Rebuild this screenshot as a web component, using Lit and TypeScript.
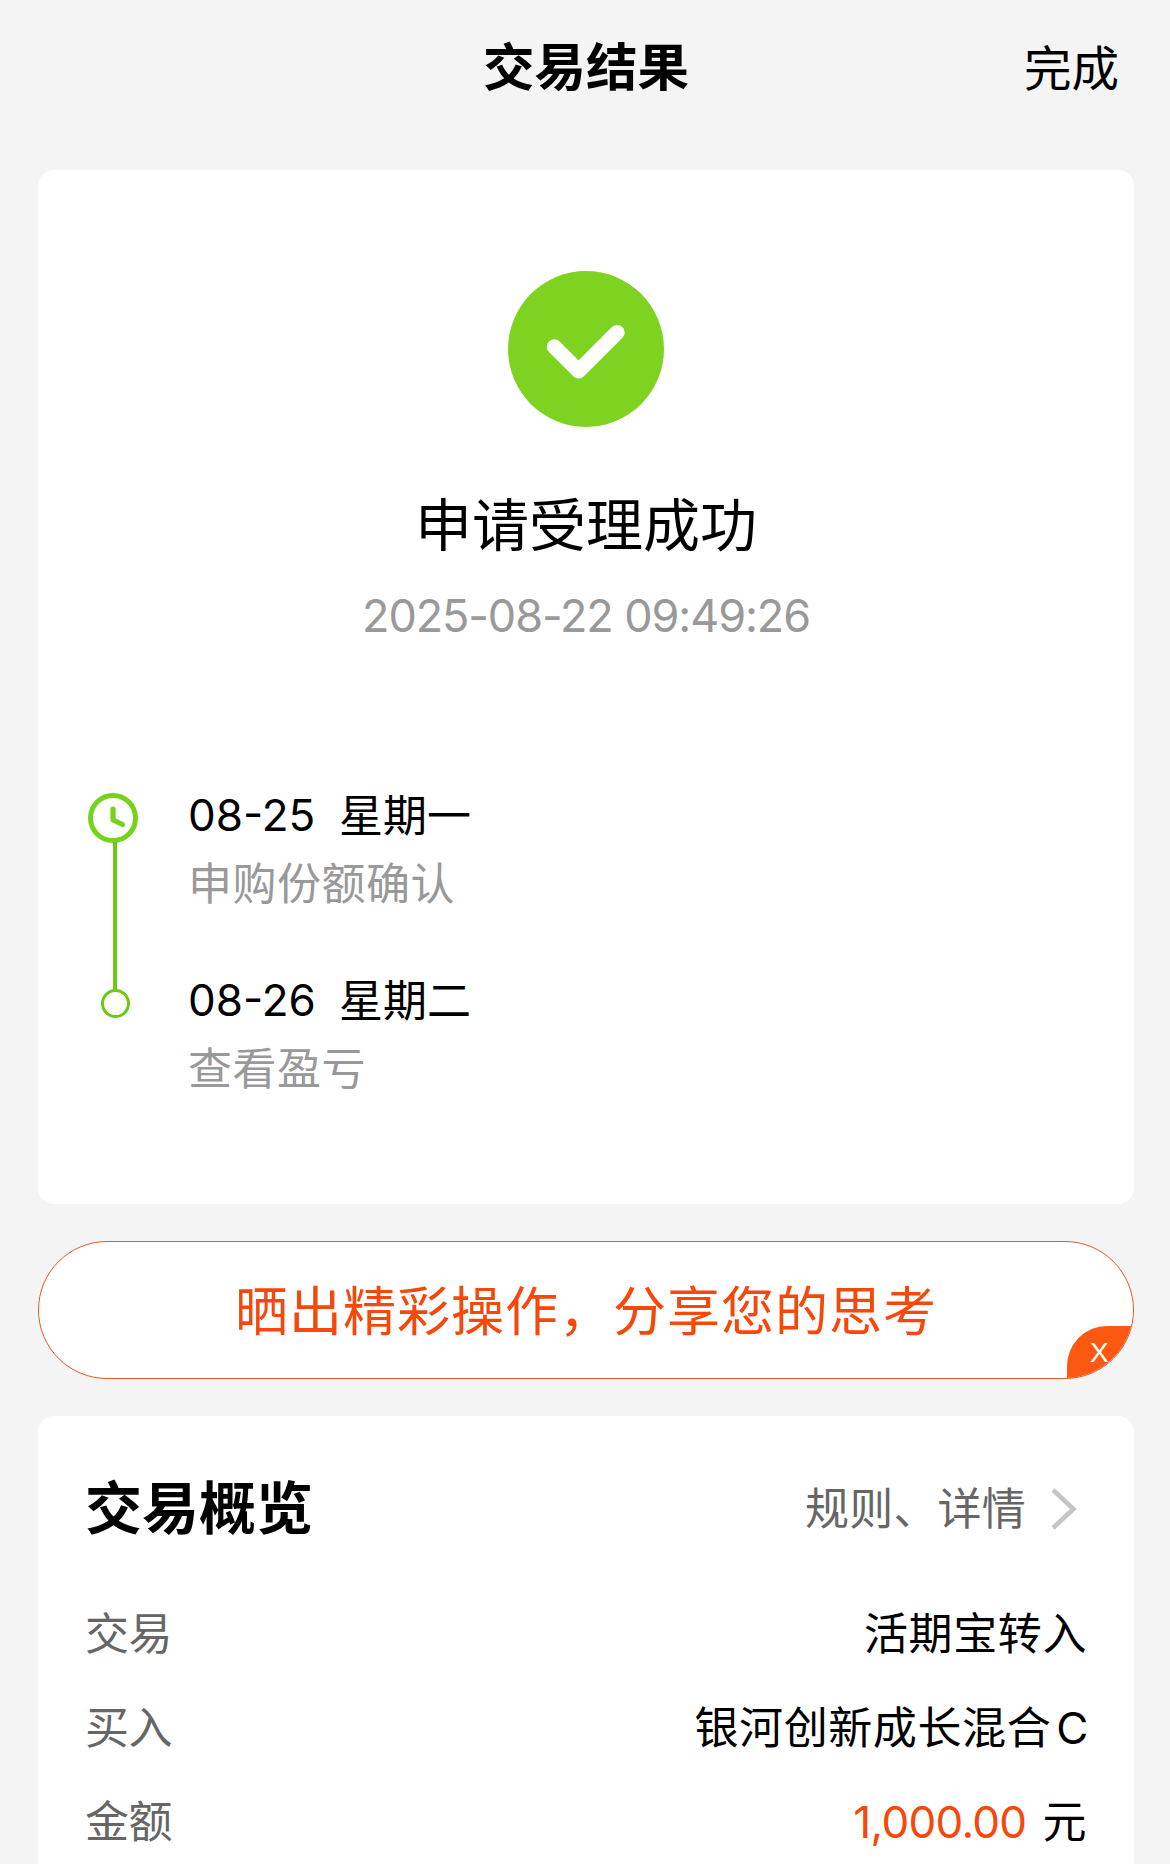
import { LitElement, html, css } from "lit";
import { customElement, property } from "lit/decorators.js";

@customElement("timeline-step")
class TimelineStep extends LitElement {
  @property() date = "";
  @property() weekday = "";
  @property() note = "";

  static styles = css`
    :host { display: block; height: 185px; }
    .when { display: flex; gap: 26px; height: 50px; line-height: 50px; font-size: 44px; color: #000; white-space: nowrap; }
    .date { width: 125px; }
    .day { padding-top: 1px; }
    .note { margin-top: 19px; height: 50px; line-height: 50px; font-size: 44px; letter-spacing: 0.5px; color: #999; white-space: nowrap; }
  `;

  render() {
    return html`
      <div class="when"><span class="date">${this.date}</span><span class="day">${this.weekday}</span></div>
      <div class="note">${this.note}</div>
    `;
  }
}

@customElement("app-root")
class AppRoot extends LitElement {
  static styles = css`
    :host {
      display: block;
      font-family: Inter, "Noto Sans CJK SC", sans-serif;
      color: #000;
    }
    .page { box-sizing: border-box; width: 1170px; height: 1864px; overflow: hidden; padding: 0 36px 0 38px; background: #f4f4f4; display: flex; flex-direction: column; }
    .bar { display: grid; grid-template-columns: 1fr auto 1fr; align-items: center; height: 128px; margin-bottom: 42px; flex: none; }
    .title { grid-column: 2; padding-top: 5px; font-size: 51.5px; line-height: 64px; font-weight: 700; }
    .done { justify-self: end; font-size: 47.5px; line-height: 60px; padding: 9px 15px 0 0; }

    .result { flex: none; box-sizing: border-box; height: 1034px; padding-top: 101px; background: #fff; border-radius: 16px; display: flex; flex-direction: column; }
    .ok { width: 156px; height: 156px; align-self: center; display: block; }
    .status { margin-top: 67px; text-align: center; font-size: 57px; line-height: 64px; }
    .time { margin-top: 33px; text-align: center; font-size: 45px; line-height: 50px; letter-spacing: -1.1px; color: #999; }
    .timeline { margin-top: 149px; padding-left: 50px; display: flex; gap: 50px; }
    .rail { width: 50px; height: 225px; padding-top: 3px; display: flex; flex-direction: column; }
    .clock { display: block; width: 50px; height: 50px; flex: none; }
    .line { flex: 1; width: 4px; margin: -1px 0 -1px 25px; background: #6cc912; }
    .dot { box-sizing: border-box; width: 29px; height: 29px; margin-left: 13px; border: 3px solid #6cc912; border-radius: 50%; }

    .share { flex: none; position: relative; box-sizing: border-box; height: 138px; margin: 37px 0; padding-bottom: 4px; background: #fff; border: 1.5px solid #e05a24; border-radius: 69px; overflow: hidden; display: flex; align-items: center; justify-content: center; font-size: 53px; letter-spacing: 1px; color: #f5480a; }
    .close { position: absolute; right: -1px; bottom: -1px; width: 67px; height: 53px; background: #fc5812; border-radius: 40px 0 0 0; display: flex; align-items: center; box-sizing: border-box; padding-left: 23px; font-family: "Liberation Sans", sans-serif; font-size: 28px; letter-spacing: 0; color: #fff; }

    .overview { flex: 1; background: #fff; border-radius: 16px 16px 0 0; padding: 61px 48px 0; }
    .head { display: flex; align-items: center; height: 64px; margin: 0 0 46px -1px; }
    .name { flex: 1; font-size: 57px; line-height: 64px; font-weight: 700; }
    .link { font-size: 44px; line-height: 50px; letter-spacing: 0.2px; color: #666; }
    .chev { display: block; width: 28px; height: 44px; margin: 0 8px 0 24px; }
    .row { display: flex; justify-content: space-between; align-items: center; height: 94px; margin: 0 -1px; font-size: 44px; line-height: 50px; white-space: nowrap; }
    .label { color: #666; letter-spacing: -0.5px; }
    .value { letter-spacing: 0.6px; }
    .share-class { margin: 0 -2px 0 5px; }
    .amount { color: #f5480a; letter-spacing: -0.7px; margin-right: 3px; }
  `;

  private rows = [
    { label: "交易", value: html`活期宝转入` },
    { label: "买入", value: html`银河创新成长混合<span class="share-class">C</span>` },
    { label: "金额", value: html`<span class="amount">1,000.00</span> 元` },
  ];

  render() {
    return html`
      <div class="page">
        <header class="bar"><span class="title">交易结果</span><span class="done">完成</span></header>

        <section class="result">
          <svg class="ok" viewBox="0 0 156 156">
            <circle cx="78" cy="78" r="78" fill="#7ed321" />
            <path d="M46.3 75.7 70.6 100 109.2 61.4" fill="none" stroke="#fff" stroke-width="15" stroke-linecap="round" stroke-linejoin="round" />
          </svg>
          <div class="status">申请受理成功</div>
          <div class="time">2025-08-22 09:49:26</div>
          <div class="timeline">
            <div class="rail">
              <svg class="clock" viewBox="0 0 50 50" fill="none" stroke="#74d41a">
                <circle cx="25" cy="25" r="22.5" stroke-width="5" />
                <path d="M25 16V27L34.5 31.5" stroke-width="5.2" stroke-linecap="round" stroke-linejoin="round" />
              </svg>
              <div class="line"></div>
              <div class="dot"></div>
            </div>
            <div class="steps">
              <timeline-step date="08-25" weekday="星期一" note="申购份额确认"></timeline-step>
              <timeline-step date="08-26" weekday="星期二" note="查看盈亏"></timeline-step>
            </div>
          </div>
        </section>

        <div class="share">晒出精彩操作，分享您的思考<span class="close">X</span></div>

        <section class="overview">
          <div class="head">
            <span class="name">交易概览</span>
            <span class="link">规则、详情</span>
            <svg class="chev" viewBox="0 0 28 44"><path d="M3 3 23.5 22 3 41" fill="none" stroke="#c4c4c4" stroke-width="4.5" /></svg>
          </div>
          ${this.rows.map((r) => html`<div class="row"><span class="label">${r.label}</span><span class="value">${r.value}</span></div>`)}
        </section>
      </div>
    `;
  }
}
